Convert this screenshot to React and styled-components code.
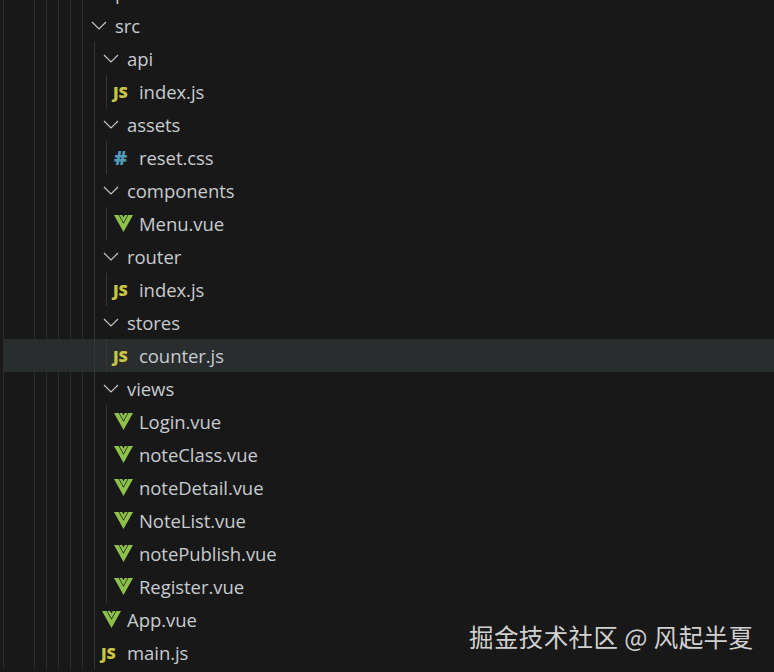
import React from 'react';
import styled, { createGlobalStyle } from 'styled-components';

const GlobalStyle = createGlobalStyle`
  html, body {
    margin: 0;
    height: 100%;
    overflow: hidden;
    background: #181818;
  }
`;

const Explorer = styled.div`
  position: relative;
  width: 774px;
  height: 672px;
  overflow: hidden;
  background: #181818;
  font-family: "Open Sans", "Noto Sans", sans-serif;
`;

const Tree = styled.ul`
  list-style: none;
  margin: -24px 0 0;
  padding: 0;
`;

const Row = styled.li`
  display: flex;
  align-items: stretch;
  height: 33px;
  padding-left: 3px;
  color: #c6cbce;
  font-size: 18.5px;
  letter-spacing: -0.06px;
  background: ${(p) =>
    p.$selected ? 'linear-gradient(to right, transparent 4px, #2a2d2e 4px)' : 'none'};
`;

const Guide = styled.span`
  flex: none;
  width: ${(p) => p.$width || 12}px;
  border-left: 1px solid ${(p) => p.$strong ? '#363636' : '#2d2d2d'};
  box-sizing: border-box;
`;

const Chevron = styled.svg`
  flex: none;
  align-self: center;
  width: 16px;
  height: 9px;
  margin: 0 8px 0 -3px;
  fill: none;
  stroke: #c5c5c5;
  stroke-width: 1.2;
`;

const FileIcon = styled.span`
  flex: none;
  display: flex;
  align-items: center;
  width: 26px;
  margin-left: -5px;
`;

const ScriptBadge = styled.span`
  color: #c8c641;
  font-family: "Open Sans", sans-serif;
  font-size: 16px;
  font-weight: 800;
  letter-spacing: -0.2px;
`;

const HashBadge = styled.span`
  margin-left: 1px;
  color: #519aba;
  font-family: "Open Sans", sans-serif;
  font-size: 20px;
  font-weight: 800;
`;

const VueMark = styled.svg`
  margin-left: 1px;
  width: 19px;
  height: 17px;
  fill: #8dc149;
`;

const Label = styled.span`
  align-self: center;
  white-space: nowrap;
  line-height: 33px;
`;

const Watermark = styled.div`
  position: absolute;
  left: 469px;
  top: 619px;
  color: #d0d0d0;
  font-family: "Noto Sans CJK SC", sans-serif;
  font-size: 24.5px;
  letter-spacing: 0.4px;
  line-height: 36px;
  white-space: nowrap;
`;

const files = [
  { name: 'public', depth: -1, folder: true },
  { name: 'src', depth: 0, folder: true },
  { name: 'api', depth: 1, folder: true },
  { name: 'index.js', depth: 2, type: 'js' },
  { name: 'assets', depth: 1, folder: true },
  { name: 'reset.css', depth: 2, type: 'css' },
  { name: 'components', depth: 1, folder: true },
  { name: 'Menu.vue', depth: 2, type: 'vue' },
  { name: 'router', depth: 1, folder: true },
  { name: 'index.js', depth: 2, type: 'js' },
  { name: 'stores', depth: 1, folder: true },
  { name: 'counter.js', depth: 2, type: 'js', selected: true },
  { name: 'views', depth: 1, folder: true },
  { name: 'Login.vue', depth: 2, type: 'vue' },
  { name: 'noteClass.vue', depth: 2, type: 'vue' },
  { name: 'noteDetail.vue', depth: 2, type: 'vue' },
  { name: 'NoteList.vue', depth: 2, type: 'vue' },
  { name: 'notePublish.vue', depth: 2, type: 'vue' },
  { name: 'Register.vue', depth: 2, type: 'vue' },
  { name: 'App.vue', depth: 1, type: 'vue' },
  { name: 'main.js', depth: 1, type: 'js' },
];

const TypeIcon = ({ type }) => {
  if (type === 'js') return <ScriptBadge>JS</ScriptBadge>;
  if (type === 'css') return <HashBadge>#</HashBadge>;
  return (
    <VueMark viewBox="0 0 19 17">
      <path d="M0 0H4.6L9.5 8.8 14.4 0H19L9.5 17Z" />
      <path d="M5.4 0H8.2L9.5 2.4 10.8 0H13.6L9.5 7.4Z" />
    </VueMark>
  );
};

const baseGuides = [31, 12, 12, 12, 12, 12];

export default function App() {
  return (
    <Explorer>
      <GlobalStyle />
      <Tree>
        {files.map((file, index) => (
          <Row key={index} $selected={file.selected}>
            {baseGuides.map((width, i) => (
              <Guide key={i} $width={width} />
            ))}
            {file.depth >= 1 && <Guide $strong />}
            {file.depth >= 2 && <Guide $strong />}
            {file.folder ? (
              <Chevron viewBox="0 0 16 9">
                <path d="M1 1l7 7 7-7" />
              </Chevron>
            ) : (
              <FileIcon>
                <TypeIcon type={file.type} />
              </FileIcon>
            )}
            <Label>{file.name}</Label>
          </Row>
        ))}
      </Tree>
      <Watermark>掘金技术社区 @ 风起半夏</Watermark>
    </Explorer>
  );
}
